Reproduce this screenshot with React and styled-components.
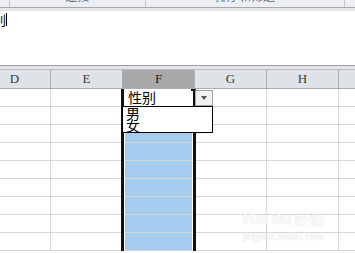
import React from 'react'
import styled, { createGlobalStyle } from 'styled-components'

const GlobalStyle = createGlobalStyle`
  html, body {
    margin: 0;
    padding: 0;
    background: #fff;
  }
  body {
    width: 355px;
    height: 253px;
    overflow: hidden;
    font-family: "Noto Sans CJK SC", "Liberation Sans", sans-serif;
  }
`

const COLS = ['D', 'E', 'F', 'G', 'H', 'I']
const ROWS = 9

const Page = styled.div`
  width: 355px;
  height: 253px;
  overflow: hidden;
  display: flex;
  flex-direction: column;
`

const Ribbon = styled.div`
  display: flex;
  height: 7px;
  overflow: hidden;
  background: #eceef2;
  border-bottom: 1px solid #a4a8ae;
`

const RibbonGroup = styled.div`
  width: ${p => p.w}px;
  flex-shrink: 0;
  border-right: 1px solid #c3c7cd;
  text-align: center;
  font-size: 12px;
  line-height: 14px;
  color: #5a6b8c;
  white-space: nowrap;
  overflow: hidden;
`

const RibbonLabel = styled.div`
  margin-top: -11px;
`

const Gap = styled.div`
  height: ${p => p.h}px;
  background: #e4e6ea;
  border-bottom: ${p => (p.line ? '1px solid #b8bcc2' : 'none')};
`

const FormulaBar = styled.div`
  height: 55px;
  background: #fff;
  border-bottom: 1px solid #9a9ea5;
  display: flex;
  align-items: flex-start;
  padding-top: 1px;
  box-sizing: border-box;
`

const FormulaText = styled.span`
  margin-left: -20px;
  font-size: 13px;
  line-height: 15px;
  color: #000;
`

const Cursor = styled.span`
  width: 1px;
  height: 13px;
  margin-top: 1px;
  background: #000;
`

const Sheet = styled.div`
  position: relative;
  flex: 1;
  overflow: hidden;
`

const Row = styled.div`
  display: flex;
  margin-left: -21px;
`

const HeadCell = styled.div`
  width: 72px;
  height: 19px;
  flex-shrink: 0;
  box-sizing: border-box;
  border-right: 1px solid #a9aeb5;
  border-bottom: 1px solid #a9aeb5;
  background: ${p => (p.selected ? '#a8a8a8' : '#dfe2e7')};
  color: ${p => (p.selected ? '#222' : '#3c3c3c')};
  font-family: "Liberation Serif", "DejaVu Serif", serif;
  font-size: 13px;
  line-height: 18px;
  text-align: center;
`

const Cell = styled.div`
  width: 72px;
  height: 18px;
  flex-shrink: 0;
  box-sizing: border-box;
  border-right: 1px solid #d6d6d6;
  border-bottom: 1px solid #d6d6d6;
  background: ${p => (p.selected ? (p.active ? '#fff' : '#a6cdf0') : '#fff')};
  font-size: 14px;
  line-height: 17px;
  padding-left: 5px;
  color: #000;
  white-space: nowrap;
`

const Body = styled.div`
  position: relative;
`

const SelectionFrame = styled.div`
  position: absolute;
  left: 121px;
  top: 0;
  bottom: 0;
  width: 75px;
  box-sizing: border-box;
  border-left: 3px solid #111;
  border-right: 3px solid #111;
  box-shadow: inset 1px 0 0 #fff, inset -1px 0 0 #fff;
`

const Corner = styled.div`
  position: absolute;
  left: 191px;
  top: 0;
  width: 2px;
  height: 2px;
  background: #111;
`

const DropButton = styled.div`
  position: absolute;
  left: 195px;
  top: 1px;
  width: 18px;
  height: 16px;
  box-sizing: border-box;
  border: 1px solid #a3a3a3;
  background: #f1f1f1;
  display: flex;
  align-items: center;
  justify-content: center;
`

const Arrow = styled.div`
  width: 0;
  height: 0;
  border-left: 3.5px solid transparent;
  border-right: 3.5px solid transparent;
  border-top: 4px solid #555;
`

const DropList = styled.div`
  position: absolute;
  left: 122px;
  top: 17px;
  width: 91px;
  height: 27px;
  box-sizing: border-box;
  border: 1px solid #000;
  background: #fff;
  overflow: hidden;
`

const DropItem = styled.div`
  height: 12px;
  line-height: 12px;
  font-size: 14px;
  padding-left: 3px;
  color: #000;
`

const Watermark = styled.div`
  position: absolute;
  left: 236px;
  top: 122px;
  width: 95px;
  display: flex;
  flex-direction: column;
  align-items: center;
  color: rgba(255, 255, 255, 0.9);
  text-shadow: 0 0 1px rgba(160, 160, 160, 0.5);
  pointer-events: none;
`

const MarkTitle = styled.div`
  display: flex;
  align-items: flex-end;
  font-family: "Liberation Sans", sans-serif;
  font-weight: bold;
  font-size: 17px;
  line-height: 16px;
  gap: 2px;
`

const MarkCn = styled.span`
  font-family: "Noto Sans CJK SC", sans-serif;
  font-size: 15px;
  font-weight: normal;
`

const MarkUrl = styled.div`
  margin-top: 4px;
  font-family: "Liberation Sans", sans-serif;
  font-size: 10px;
  line-height: 11px;
`

const App = () => {
  const rows = Array.from({ length: ROWS }, (_, i) => i)
  return (
    <Page>
      <GlobalStyle />
      <Ribbon>
        <RibbonGroup w={9} />
        <RibbonGroup w={135}><RibbonLabel>连接</RibbonLabel></RibbonGroup>
        <RibbonGroup w={198}><RibbonLabel>排序和筛选</RibbonLabel></RibbonGroup>
        <RibbonGroup w={40} />
      </Ribbon>
      <Gap h={3} />
      <FormulaBar>
        <FormulaText>性别</FormulaText>
        <Cursor />
      </FormulaBar>
      <Gap h={3} line />
      <Sheet>
        <Row>
          {COLS.map(c => (
            <HeadCell key={c} selected={c === 'F'}>{c}</HeadCell>
          ))}
        </Row>
        <Body>
          {rows.map(r => (
            <Row key={r}>
              {COLS.map(c => (
                <Cell key={c} selected={c === 'F'} active={c === 'F' && r === 0}>
                  {c === 'F' && r === 0 ? '性别' : ''}
                </Cell>
              ))}
            </Row>
          ))}
          <SelectionFrame />
          <Corner />
          <DropButton><Arrow /></DropButton>
          <DropList>
            <DropItem>男</DropItem>
            <DropItem>女</DropItem>
          </DropList>
          <Watermark>
            <MarkTitle>Bai<span>du</span><MarkCn>经验</MarkCn></MarkTitle>
            <MarkUrl>jingyan.baidu.com</MarkUrl>
          </Watermark>
        </Body>
      </Sheet>
    </Page>
  )
}

export default App
